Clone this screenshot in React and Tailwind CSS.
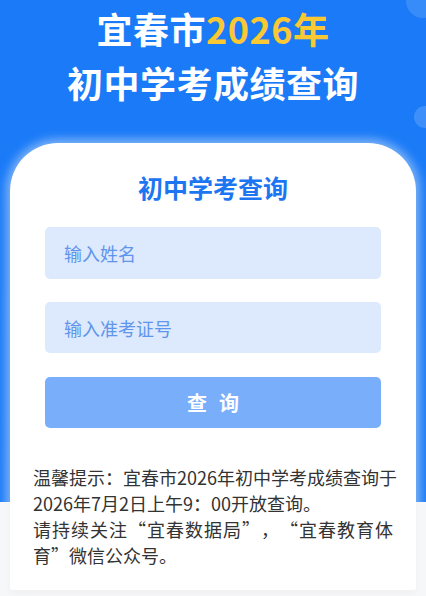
export default function App() {
  return (
    <div
      className="relative w-[426px] min-h-[596px] overflow-hidden bg-[linear-gradient(to_bottom,#1a7af7_0px,#1c7cf7_502px,#f6f7f9_502px)] [text-spacing-trim:space-all]"
      style={{ fontFamily: '"Noto Sans CJK SC", "Noto Sans", sans-serif' }}
    >
      {/* soft decorative bubbles on the right edge */}
      <div className="absolute right-[-14px] top-[-16px] h-[34px] w-[34px] rounded-full bg-[#4b97fa] opacity-60" />
      <div className="absolute right-[-10px] top-[106px] h-[22px] w-[22px] rounded-full bg-[#4f99fb] opacity-70" />

      <header className="pt-[1px] text-center text-[36px] font-bold leading-[54px] text-white tracking-[0.5px]">
        <div>
          宜春市<span className="text-[#fac832]">2026年</span>
        </div>
        <div>初中学考成绩查询</div>
      </header>

      <main className="mx-[10px] mt-[34px] rounded-t-[48px] rounded-b-[2px] bg-white pb-[22px] pt-[28px] shadow-[0_0_10px_4px_rgba(255,255,255,0.45),0_2px_8px_rgba(0,0,0,0.08)]">
        <h2 className="text-center text-[25px] font-bold leading-[32px] text-[#1d76f1]">
          初中学考查询
        </h2>

        <form className="mt-[24px] flex flex-col px-[35px]" onSubmit={(e) => e.preventDefault()}>
          <input
            className="h-[52px] w-full rounded-[5px] bg-[#dde9fc] px-[19px] text-[18px] text-[#333] outline-none placeholder:text-[#5f95ec]"
            placeholder="输入姓名"
          />
          <input
            className="mt-[23px] h-[51px] w-full rounded-[5px] bg-[#dde9fc] px-[19px] text-[18px] text-[#333] outline-none placeholder:text-[#5f95ec]"
            placeholder="输入准考证号"
          />
          <button
            type="submit"
            className="mt-[24px] flex h-[51px] w-full items-center justify-center gap-[12px] rounded-[5px] bg-[#79aefa] text-[20px] font-bold text-white"
          >
            <span>查</span>
            <span>询</span>
          </button>
        </form>

        {/* notice paragraph: wrapped lines are justified edge to edge */}
        <div className="mt-[36px] px-[23px] text-[18px] leading-[26px] text-[#333] whitespace-nowrap">
          <div className="text-justify [text-align-last:justify]">温馨提示：宜春市2026年初中学考成绩查询于</div>
          <div>2026年7月2日上午9：00开放查询。</div>
          <div className="text-justify [text-align-last:justify]">请持续关注“宜春数据局”，“宜春教育体</div>
          <div>育”微信公众号。</div>
        </div>
      </main>
    </div>
  );
}
